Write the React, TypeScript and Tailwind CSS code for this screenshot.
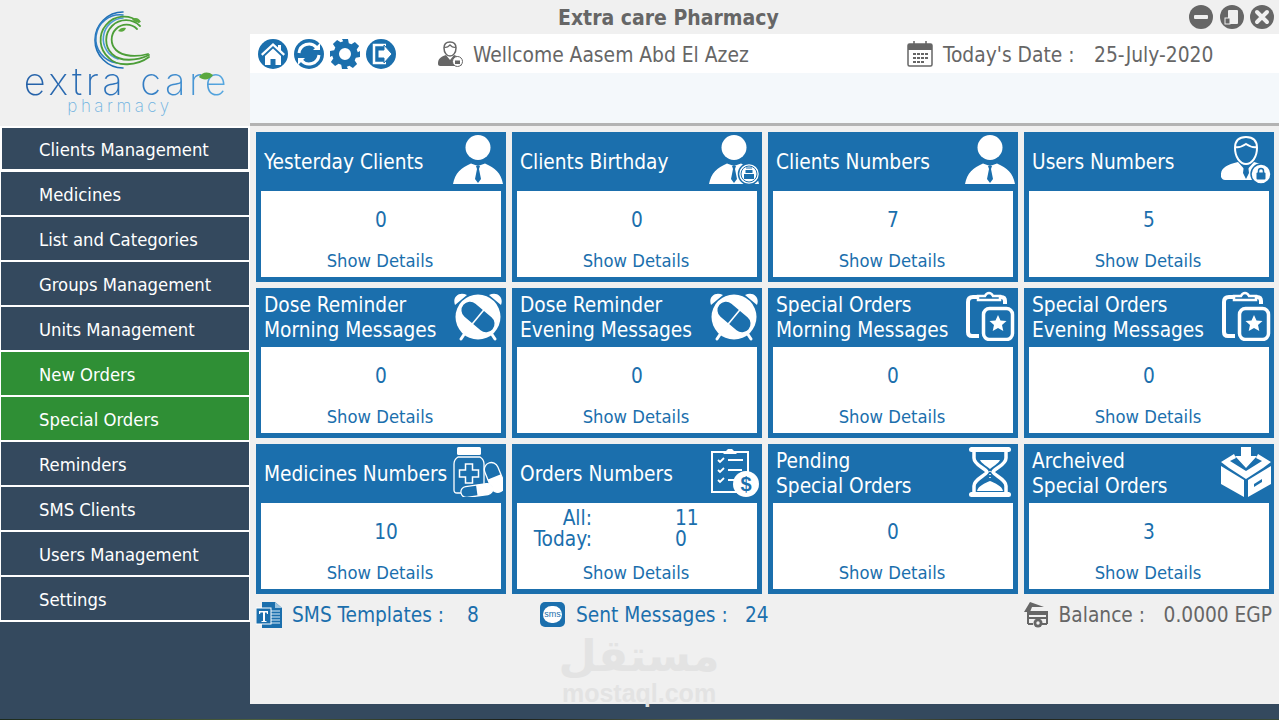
import React from 'react';

const BLUE = '#1b6fad';

const Person = () => (
  <>
    <circle cx="25" cy="12.5" r="12.5" fill="#fff" />
    <path d="M0 49C2 38 8 33 18 28.5L25 31L32 28.5C42 33 48 38 50 49Z" fill="#fff" />
    <path d="M23 31h4l-1 3 2 10-3 4-3-4 2-10z" fill={BLUE} />
  </>
);

const PersonIcon = () => (
  <svg viewBox="0 0 50 50" className="w-[50px] h-[50px]">
    <Person />
  </svg>
);

const BirthdayIcon = () => (
  <svg viewBox="0 0 50 50" className="w-[50px] h-[50px]">
    <Person />
    <circle cx="40" cy="39" r="10.5" fill="#fff" stroke={BLUE} strokeWidth="1.5" />
    <circle cx="40" cy="39" r="8" fill="none" stroke={BLUE} strokeWidth="1" />
    <path d="M35 39h10v5H35zM36.5 35h7v3h-7z" fill={BLUE} />
    <path d="M38 32v2M40 32v2M42 32v2" stroke={BLUE} strokeWidth="1" />
  </svg>
);

const UserLockIcon = () => (
  <svg viewBox="0 0 50 50" className="w-[50px] h-[50px]">
    <path d="M25 2c-7 0-11 4-11 11 0 9 5 16 11 16s11-7 11-16c0-7-4-11-11-11z" fill="none" stroke="#fff" strokeWidth="2" />
    <path d="M14 12c4 1 8-1 11-3 3 2 7 4 11 3" fill="none" stroke="#fff" strokeWidth="2" />
    <path d="M0 42c-1-8 4-12 17-15l8 9 8-9c12 3 17 7 17 15-1 2-2 3-4 3H4c-2 0-3-1-4-3z" fill="#fff" />
    <path d="M23 30l2 3 2-3 1 8-3 6-3-6z" fill={BLUE} />
    <circle cx="40" cy="39" r="10" fill="#fff" stroke={BLUE} strokeWidth="1.5" />
    <rect x="35.5" y="37.5" width="9" height="7" rx="1" fill={BLUE} />
    <path d="M37.5 38v-2a2.5 2.5 0 0 1 5 0v2" fill="none" stroke={BLUE} strokeWidth="1.5" />
  </svg>
);

const AlarmIcon = () => (
  <svg viewBox="0 0 50 50" className="w-[50px] h-[50px]">
    <path d="M2 14C-1 6 6 0 14 4zM48 14C51 6 44 0 36 4z" fill="#fff" />
    <path d="M12 42l-4 6M38 42l4 6" stroke="#fff" strokeWidth="3" strokeLinecap="round" />
    <circle cx="25" cy="26" r="22.5" fill="#fff" />
    <g transform="rotate(40 25 26)">
      <rect x="6" y="17.5" width="38" height="17" rx="8.5" fill={BLUE} />
      <rect x="24.2" y="17" width="1.6" height="18" fill="#fff" />
    </g>
  </svg>
);

const ClipStarIcon = () => (
  <svg viewBox="0 0 50 50" className="w-[50px] h-[50px]">
    <path d="M12 6H8C4.500 6 3 8 3 11v30c0 3 1.500 4 4 4h7" fill="none" stroke="#fff" strokeWidth="4" />
    <path d="M35 6h1c3 0 4 2 4 4v3" fill="none" stroke="#fff" strokeWidth="4" />
    <path d="M13 9V5h7c1-2 2-3 4-3s3 1 4 3h7v4z" fill="none" stroke="#fff" strokeWidth="2.500" />
    <rect x="18.500" y="17.500" width="29" height="31" rx="6" fill={BLUE} stroke="#fff" strokeWidth="3.500" />
    <path d="M33 24l2.500 5.500 6 .6-4.500 4 1.300 6-5.300-3.100-5.300 3.100 1.300-6-4.500-4 6-.6z" fill="#fff" />
  </svg>
);

const MedicineIcon = () => (
  <svg viewBox="0 0 50 50" className="w-[50px] h-[50px]">
    <rect x="4" y="0" width="24" height="8" rx="1.500" fill="#fff" />
    <path d="M5 10h22c3 2 4 4 4 7v26c0 2-1 3-3 3H4c-2 0-3-1-3-3V17c0-3 1-5 4-7z" fill={BLUE} stroke="#fff" strokeWidth="1.300" />
    <path d="M12.500 17h7v6h6v7h-6v6h-7v-6h-6v-7h6z" fill="none" stroke="#fff" strokeWidth="1.500" />
    <g transform="rotate(-22 41 29)">
      <rect x="34" y="15" width="14" height="31" rx="7" fill={BLUE} stroke="#fff" strokeWidth="1.300" />
      <path d="M34 30h14v9a7 7 0 0 1-14 0z" fill="#fff" />
    </g>
    <g transform="rotate(-8 24 45)">
      <rect x="8" y="38" width="32" height="11" rx="5.500" fill={BLUE} stroke="#fff" strokeWidth="1.300" />
      <path d="M24 38h10.500a5.500 5.500 0 0 1 0 11H24z" fill="#fff" />
    </g>
  </svg>
);

const OrdersIcon = () => (
  <svg viewBox="0 0 50 50" className="w-[50px] h-[50px]">
    <path d="M3 5h36v40H3z" fill="none" stroke="#fff" strokeWidth="2" />
    <path d="M16 5l3-3h4l3 3 2 2H14z" fill="#fff" />
    <path d="M9 13l2 2 4-4M9 23l2 2 4-4M9 33l2 2 4-4" fill="none" stroke="#fff" strokeWidth="1.800" />
    <path d="M19 13h15M19 23h14M19 33h8" stroke="#fff" strokeWidth="2" />
    <circle cx="37" cy="37" r="13" fill="#fff" />
    <text x="37" y="44" textAnchor="middle" fontSize="20" fontWeight="700" fontFamily="'Liberation Sans', sans-serif" fill={BLUE}>$</text>
  </svg>
);

const HourglassIcon = () => (
  <svg viewBox="0 0 50 50" className="w-[50px] h-[50px]">
    <rect x="4" y="0" width="42" height="5" rx="2.500" fill="#fff" />
    <rect x="4" y="45" width="42" height="5" rx="2.500" fill="#fff" />
    <path d="M9 5v6c0 7 11 10 13 14-2 4-13 7-13 14v6M41 5v6c0 7-11 10-13 14 2 4 13 7 13 14v6" fill="none" stroke="#fff" strokeWidth="3.500" />
    <path d="M15 13h20c-2 4-7 6-10 9-3-3-8-5-10-9zM12 44c1-5 8-8 13-10 5 2 12 5 13 10z" fill="#fff" />
    <path d="M25 24v1M25 27v1M25 30v1" stroke="#fff" strokeWidth="1.500" />
  </svg>
);

const BoxIcon = () => (
  <svg viewBox="0 0 50 50" className="w-[50px] h-[50px]">
    <path d="M20 0h10v9h6L25 21 14 9h6z" fill="#fff" />
    <path d="M0 15L13 7l2 4-6 3 16 10 16-10-6-3 2-4 13 8-8 6-17 11L8 21z" fill="#fff" />
    <path d="M0 19l23 14v17L0 37zM50 19L27 33v17l23-13z" fill="#fff" />
    <path d="M33 37l8-5v3l-8 5z" fill={BLUE} />
  </svg>
);

const NavCircle: React.FC<{ children: React.ReactNode }> = ({ children }) => (
  <svg viewBox="0 0 30 30" className="w-[30px] h-[30px] shrink-0">
    <circle cx="15" cy="15" r="15" fill={BLUE} />
    {children}
  </svg>
);

const HomeNav = () => (
  <NavCircle>
    <path d="M15 4L3 15l1.500 1.700L15 7l10.500 9.700L27 15l-4-3.700V6h-3v2.500z" fill="#fff" />
    <path d="M7 17l8-7.500 8 7.500v9h-5.500v-6h-5v6H7z" fill="#fff" />
  </NavCircle>
);

const RefreshNav = () => (
  <NavCircle>
    <path d="M5 14a10 10 0 0 1 17.500-5.500" fill="none" stroke="#fff" strokeWidth="3" />
    <path d="M25 16a10 10 0 0 1-17.500 5.500" fill="none" stroke="#fff" strokeWidth="3" />
    <path d="M19 11h7V4zM11 19H4v7z" fill="#fff" />
  </NavCircle>
);

const GearNav = () => (
  <svg viewBox="0 0 30 30" className="w-[30px] h-[30px] shrink-0">
    <path
      fillRule="evenodd"
      fill={BLUE}
      d="M12 0h6l.8 4.200 2.600 1.100 3.500-2.400 4.200 4.200-2.400 3.500 1.100 2.600L30 12v6l-4.200.8-1.100 2.600 2.400 3.500-4.200 4.200-3.500-2.400-2.600 1.100L18 30h-6l-.8-4.200-2.600-1.100-3.500 2.400-4.200-4.200 2.400-3.500-1.100-2.600L0 18v-6l4.200-.8 1.100-2.600-2.400-3.500 4.200-4.200 3.500 2.400 2.600-1.100zM15 9a6 6 0 1 0 0 12 6 6 0 0 0 0-12z"
    />
  </svg>
);

const ExitNav = () => (
  <NavCircle>
    <path d="M20 6H8v18h12" fill="none" stroke="#fff" strokeWidth="2.500" />
    <path d="M12 11h6V6l8 9-8 9v-5h-6z" fill="#fff" stroke={BLUE} strokeWidth="1" />
  </NavCircle>
);

const WinBtn: React.FC<{ children: React.ReactNode }> = ({ children }) => (
  <svg viewBox="0 0 24 24" className="w-6 h-6">
    <circle cx="12" cy="12" r="12" fill="#666" />
    {children}
  </svg>
);

const UserBadge = () => (
  <svg viewBox="0 0 26 26" className="w-[26px] h-[26px] shrink-0">
    <path d="M13 1c-4 0-6 2-6 6 0 5 3 8 6 8s6-3 6-8c0-4-2-6-6-6z" fill="none" stroke="#666" strokeWidth="1.500" />
    <path d="M7 6c2 1 4 0 6-2 2 2 4 3 6 2" fill="none" stroke="#666" strokeWidth="1.300" />
    <path d="M1 23c0-5 2-7 8-9l4 5 4-5c6 2 8 4 8 9 0 1-1 2-2 2H3c-1 0-2-1-2-2z" fill="#666" />
    <circle cx="20.500" cy="20.500" r="5" fill="#fff" stroke="#666" strokeWidth="1" />
    <rect x="18" y="19.500" width="5" height="3.500" fill="#666" />
  </svg>
);

const CalendarIcon = () => (
  <svg viewBox="0 0 26 26" className="w-[26px] h-[26px] shrink-0">
    <rect x="1" y="3" width="24" height="22" rx="1.500" fill="#fff" stroke="#666" strokeWidth="1.500" />
    <rect x="1" y="3" width="24" height="6" fill="#666" />
    <path d="M7 0v6M19 0v6" stroke="#666" strokeWidth="1.500" />
    <path
      d="M6 12h3v2H6zM10 12h3v2h-3zM14 12h3v2h-3zM18 12h3v2h-3zM6 16h3v2H6zM10 16h3v2h-3zM14 16h3v2h-3zM18 16h3v2h-3zM6 20h3v2H6zM10 20h3v2h-3zM14 20h3v2h-3z"
      fill="#666"
    />
  </svg>
);

const TemplateIcon = () => (
  <svg viewBox="0 0 28 26" className="w-[28px] h-[26px] shrink-0">
    <path d="M6 0h13l7 6v20H6z" fill={BLUE} />
    <path d="M19 0v6h7z" fill="#9cc4e0" />
    <path d="M15 9h9M15 12h9M15 15h9M15 18h9M15 21h9" stroke="#9cc4e0" strokeWidth="1.500" />
    <rect x="0" y="6" width="15" height="16" fill={BLUE} stroke="#fff" strokeWidth="1" />
    <path d="M3 9h9v3h-1l-.5-1.500H9V19h1.500v1h-5v-1H7v-8.500H4.500L4 12H3z" fill="#fff" />
  </svg>
);

const SmsIcon = () => (
  <div className="w-[25px] h-[25px] rounded-[5px] bg-[#1b6fad] flex items-center justify-center shrink-0">
    <div className="w-[19px] h-[17px] rounded-full bg-white text-[#1b6fad] text-[9px] leading-[17px] text-center font-['Liberation_Sans',sans-serif]">sms</div>
  </div>
);

const BalanceIcon = () => (
  <svg viewBox="0 0 26 26" className="w-[26px] h-[26px] shrink-0">
    <path d="M1 10L7 0l14 5H9l-2 5z" fill="#666" />
    <path d="M5 22V10h19v12" fill="none" stroke="#666" strokeWidth="2" />
    <path d="M5 12h19M5 16h19" stroke="#666" strokeWidth="2" />
    <path d="M5 22h5M19 22h5" stroke="#666" strokeWidth="2" />
    <circle cx="15" cy="21" r="4.500" fill="#666" />
    <circle cx="15" cy="21" r="1.700" fill="#f0f0f0" />
  </svg>
);

const Logo = () => (
  <div className="h-[126px] bg-[#f0f0f0] flex flex-col items-center relative">
    <svg viewBox="0 0 60 60" className="w-[60px] h-[60px] mt-[10px] -ml-[5px] shrink-0">
      <g fill="none" strokeLinecap="round">
        <path d="M30 2A27 27 0 0 0 30 58" stroke="#1f6fb5" strokeWidth="1.600" />
        <path d="M30 5A24 24 0 0 0 24 53" stroke="#2f7fc4" strokeWidth="1.600" />
        <path d="M30 8A21 21 0 0 0 25 49" stroke="#4d9bd5" strokeWidth="1.600" />
        <path d="M46 12A22 22 0 0 0 16 48C24 57 44 56 56 47" stroke="#4c9e38" strokeWidth="1.800" />
        <path d="M47 16A18 18 0 0 0 19 44C27 52 44 51 56 45" stroke="#4c9e38" strokeWidth="1.800" />
        <path d="M44 19A14 14 0 0 0 23 40C30 47 44 47 55 44" stroke="#4c9e38" strokeWidth="1.800" />
      </g>
      <path d="M39 9c4-2 7-1 9 3-4 1-7 0-9-3zM25 21c2-3 5-4 8-3-1 3-4 5-8 3z" fill="#5aa83e" />
    </svg>
    <div className="font-['Inter',sans-serif] font-extralight text-[38px] leading-[30px] tracking-[3.500px] whitespace-nowrap mt-[-4px] ml-[4px] bg-[linear-gradient(90deg,#2460a7,#2f78c0_55%,#58aae2)] bg-clip-text text-transparent">
      extra care
    </div>
    <div className="font-['Inter',sans-serif] font-extralight text-[17px] leading-[18px] tracking-[3.500px] text-[#6fb2e0] mt-[1px] -ml-[10px]">pharmacy</div>
    <svg viewBox="0 0 14 8" className="w-[14px] h-[8px] absolute left-[199px] top-[72px]">
      <path d="M0 5c3-5 9-6 14-2-3 5-10 6-14 2z" fill="#5aa83e" />
    </svg>
  </div>
);

const menu = [
  { label: 'Clients Management' },
  { label: 'Medicines' },
  { label: 'List and Categories' },
  { label: 'Groups Management' },
  { label: 'Units Management' },
  { label: 'New Orders', green: true },
  { label: 'Special Orders', green: true },
  { label: 'Reminders' },
  { label: 'SMS Clients' },
  { label: 'Users Management' },
  { label: 'Settings' },
];

const Sidebar = () => (
  <aside className="w-[250px] shrink-0 bg-[#34495e] flex flex-col">
    <Logo />
    {menu.map((item, i) => (
      <div
        key={item.label}
        className={`${i === 0 ? 'h-[46px] border-x-2 border-t-2 border-b-[3px] pl-[37px]' : 'h-[45px] border-x border-b-2 pl-[38px]'} pt-[2px] border-white flex items-center text-white text-[18.3px] ${item.green ? 'bg-[#2f8f35]' : 'bg-[#34495e]'}`}
      >
        {item.label}
      </div>
    ))}
  </aside>
);

type CardProps = {
  title: string[];
  value?: string;
  icon: React.ReactNode;
  orders?: boolean;
};

const Card: React.FC<CardProps> = ({ title, value, icon, orders }) => (
  <div className="h-[150px] bg-[#1b6fad] flex flex-col">
    <div className="h-[59px] shrink-0 flex items-center justify-between pl-2 pr-[3px]">
      <div className="text-white text-[20.7px] leading-[25px] pt-[1px] whitespace-nowrap">
        {title.map((t) => (
          <div key={t}>{t}</div>
        ))}
      </div>
      <div className="shrink-0 self-start mt-[3px]">{icon}</div>
    </div>
    <div className="mx-[5px] mb-[5px] flex-1 bg-white text-[#1b6fad] flex flex-col items-center">
      {orders ? (
        <div className="h-[55px] pt-[5px] w-full grid grid-cols-[75px_1fr] content-start gap-x-[83px] text-[20.7px] leading-[21px]">
          <div className="text-right">All:</div>
          <div>11</div>
          <div className="text-right">Today:</div>
          <div>0</div>
        </div>
      ) : (
        <div className={`h-[55px] pt-[16px] text-[20.7px] leading-[26px] ${value === '10' ? 'pl-[10px]' : ''}`}>{value}</div>
      )}
      <div className="text-[18.3px] leading-[24px] mt-[3px] -ml-[2px]">Show Details</div>
    </div>
  </div>
);

const cards: CardProps[] = [
  { title: ['Yesterday Clients'], value: '0', icon: <PersonIcon /> },
  { title: ['Clients Birthday'], value: '0', icon: <BirthdayIcon /> },
  { title: ['Clients Numbers'], value: '7', icon: <PersonIcon /> },
  { title: ['Users Numbers'], value: '5', icon: <UserLockIcon /> },
  { title: ['Dose Reminder', 'Morning Messages'], value: '0', icon: <AlarmIcon /> },
  { title: ['Dose Reminder', 'Evening Messages'], value: '0', icon: <AlarmIcon /> },
  { title: ['Special Orders', 'Morning Messages'], value: '0', icon: <ClipStarIcon /> },
  { title: ['Special Orders', 'Evening Messages'], value: '0', icon: <ClipStarIcon /> },
  { title: ['Medicines Numbers'], value: '10', icon: <MedicineIcon /> },
  { title: ['Orders Numbers'], icon: <OrdersIcon />, orders: true },
  { title: ['Pending', 'Special Orders'], value: '0', icon: <HourglassIcon /> },
  { title: ['Archeived', 'Special Orders'], value: '3', icon: <BoxIcon /> },
];

export default function App() {
  return (
    <div className="w-[1279px] h-[720px] overflow-hidden bg-[#34495e] flex flex-col font-['DejaVu_Sans_Condensed','DejaVu_Sans',sans-serif]">
      <div className="flex h-[704px] shrink-0">
        <Sidebar />
        <main className="flex-1 bg-[#f0f0f0] flex flex-col relative">
          {/* title bar */}
          <div className="h-[34px] shrink-0 flex items-center justify-between pl-[308px] pr-[5px]">
            <div className="text-[#666] font-bold text-[21px] pt-[3px]">Extra care Pharmacy</div>
            <div className="flex gap-[6.500px]">
              <WinBtn>
                <rect x="5" y="10" width="14" height="4" rx="1" fill="#f0f0f0" />
              </WinBtn>
              <WinBtn>
                <rect x="8" y="5" width="10" height="14" rx="1" fill="#f0f0f0" />
                <rect x="5" y="13" width="5" height="6" fill="#666" stroke="#f0f0f0" strokeWidth="1" />
              </WinBtn>
              <WinBtn>
                <path d="M7 7l10 10M17 7L7 17" stroke="#f0f0f0" strokeWidth="4" strokeLinecap="round" />
              </WinBtn>
            </div>
          </div>
          {/* toolbar */}
          <div className="h-[39px] shrink-0 bg-white flex items-center pl-2 text-[#666] text-[20.8px]">
            <div className="flex gap-[6px] w-[179px] shrink-0">
              <HomeNav />
              <RefreshNav />
              <GearNav />
              <ExitNav />
            </div>
            <div className="w-[470px] shrink-0 flex items-center gap-[10px]">
              <UserBadge />
              <span className="mt-[4px]">Wellcome Aasem Abd El Azez</span>
            </div>
            <div className="flex items-center gap-[10px]">
              <CalendarIcon />
              <span className="w-[141px] mt-[4px]">Today's Date :</span>
              <span className="mt-[4px]">25-July-2020</span>
            </div>
          </div>
          <div className="h-[50px] shrink-0 bg-[#f4f8fb]" />
          <div className="h-[3px] shrink-0 bg-[#b3b3b3]" />
          {/* cards */}
          <div className="grid grid-cols-4 gap-[6px] pl-[6px] pr-[5px] pt-[6px]">
            {cards.map((c) => (
              <Card key={c.title.join(' ')} {...c} />
            ))}
          </div>
          {/* footer stats */}
          <div className="flex items-center pl-[6px] pr-[7px] pt-[7px] text-[20.7px] leading-[26px]">
            <TemplateIcon />
            <span className="ml-[8px] w-[175px] pt-[1px] text-[#1b6fad]">SMS Templates :</span>
            <span className="w-[73px] pt-[1px] text-[#1b6fad]">8</span>
            <SmsIcon />
            <span className="ml-[11px] w-[169px] pt-[1px] text-[#1b6fad]">Sent Messages :</span>
            <span className="pt-[1px] text-[#1b6fad]">24</span>
            <div className="ml-auto flex items-center text-[#666]">
              <BalanceIcon />
              <span className="ml-[10px] w-[105px] pt-[1px]">Balance :</span>
              <span className="pt-[1px]">0.0000 EGP</span>
            </div>
          </div>
          {/* site watermark */}
          <div className="absolute left-[312px] top-[630px] w-[154px] flex flex-col items-center text-[#e3e3e3] font-bold pointer-events-none">
            <div dir="rtl" className="font-['DejaVu_Sans',sans-serif] text-[44px] leading-[52px]">مستقل</div>
            <div className="font-['Liberation_Sans',sans-serif] text-[25px] leading-[22px] whitespace-nowrap">mostaql.com</div>
          </div>
        </main>
      </div>
      <div className="flex-1" />
      <div className="h-px shrink-0 bg-[linear-gradient(90deg,#1c2a1c,#4c5f3c_20%,#1a1f1a_40%,#6a7a5a_60%,#20241c_80%,#3a4a38)]" />
    </div>
  );
}
